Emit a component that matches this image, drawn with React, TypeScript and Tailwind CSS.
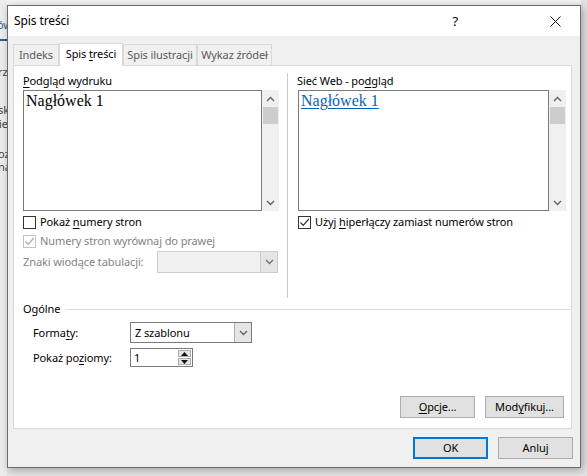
import React from 'react';

const ui = "font-['Segoe_UI','Noto_Sans',sans-serif] text-[11px] leading-[16px] tracking-[-0.1px]";

function Chevron({ dir, color = '#606060' }: { dir: 'up' | 'down'; color?: string }) {
  return (
    <svg width="9" height="6" viewBox="0 0 9 6">
      <polyline
        points={dir === 'up' ? '1,5 4.5,1.5 8,5' : '1,1 4.5,4.5 8,1'}
        fill="none"
        stroke={color}
        strokeWidth="1.3"
      />
    </svg>
  );
}

function Check({ color }: { color: string }) {
  return (
    <svg width="11" height="11" viewBox="0 0 11 11">
      <polyline points="1.5,5.5 4.2,8.3 9.8,2" fill="none" stroke={color} strokeWidth="1.2" />
    </svg>
  );
}

function Checkbox({ checked, disabled }: { checked?: boolean; disabled?: boolean }) {
  return (
    <div
      className={`w-[13px] h-[13px] border flex items-center justify-center bg-white shrink-0 ${
        disabled ? 'border-[#c4c4c4]' : 'border-[#333333]'
      }`}
    >
      {checked && <Check color={disabled ? '#a8a8a8' : '#333333'} />}
    </div>
  );
}

function Scrollbar() {
  return (
    <div className="w-[17px] h-[121px] bg-[#f0f0f0] flex flex-col items-center shrink-0">
      <div className="h-[17px] flex items-center justify-center">
        <Chevron dir="up" />
      </div>
      <div className="w-[15px] h-[17px] bg-[#cdcdcd]" />
      <div className="flex-1" />
      <div className="h-[17px] flex items-center justify-center">
        <Chevron dir="down" />
      </div>
    </div>
  );
}

function U({ children }: { children: React.ReactNode }) {
  return <span className="underline underline-offset-2">{children}</span>;
}

function Tab({ label, active, w }: { label: React.ReactNode; active?: boolean; w: string }) {
  return (
    <div
      className={`${w} flex items-center justify-center whitespace-nowrap border-t border-x border-[#d9d9d9] ${
        active ? 'h-[23px] bg-white text-black relative z-10 pb-[2px]' : 'h-[21px] mb-px text-[#5a5a5a] bg-[#f0f0f0]'
      }`}
    >
      {label}
    </div>
  );
}

function Button({ children, w, primary }: { children: React.ReactNode; w: string; primary?: boolean }) {
  return (
    <div
      className={`${w} h-[22px] bg-[#e1e1e1] flex items-center justify-center whitespace-nowrap ${
        primary ? 'border-2 border-[#0078d7]' : 'border border-[#adadad]'
      }`}
    >
      {children}
    </div>
  );
}

export default function App() {
  return (
    <div className={`w-[587px] h-[476px] bg-[#e4e4e4] flex overflow-hidden ${ui}`}>
      {/* document behind the dialog */}
      <div className="w-[7px] h-full bg-[#ececec] overflow-hidden flex flex-col text-[#444] shrink-0 text-[11px]">
        <div className="h-[17px]" />
        <div className="h-[16px] -ml-[3px] text-[#2b579a] whitespace-nowrap">ów</div>
        <div className="h-[6px]" />
        <div className="h-[2px] bg-[#2b579a]" />
        <div className="h-[23px]" />
        <div className="h-[16px] -ml-[2px] whitespace-nowrap">rz</div>
        <div className="h-[24px]" />
        <div className="h-[12px] leading-[12px] -ml-[2px] whitespace-nowrap">sk</div>
        <div className="h-[2px]" />
        <div className="h-[12px] leading-[12px] -ml-[1px] whitespace-nowrap">ie</div>
        <div className="h-[18px]" />
        <div className="h-[11px] leading-[11px] -ml-[2px] whitespace-nowrap">oz</div>
        <div className="h-[2px]" />
        <div className="h-[11px] leading-[11px] -ml-[2px] whitespace-nowrap">na</div>
      </div>

      <div className="flex flex-col">
        <div className="h-[5px] bg-[#f3f3f3]" />
        <div className="w-[574px] h-[463px] border border-[#6b6b6b] bg-[#f0f0f0] flex flex-col shadow-[2px_2px_8px_rgba(0,0,0,0.3)]">
          {/* title bar */}
          <div className="h-[30px] bg-white flex items-center pl-[6px] shrink-0">
            <span className="text-[12px]">Spis treści</span>
            <span className="ml-auto mr-[72px] text-[13px]">?</span>
            <div className="w-[50px] h-full flex items-center justify-center">
              <svg width="11" height="11" viewBox="0 0 11 11">
                <path d="M0.5 0.5 L10.5 10.5 M10.5 0.5 L0.5 10.5" stroke="#111" strokeWidth="1" />
              </svg>
            </div>
          </div>

          {/* tabs */}
          <div className="mt-[7px] ml-[5px] h-[23px] -mb-px flex items-end shrink-0">
            <Tab w="w-[46px]" label="Indeks" />
            <Tab
              w="w-[64px]"
              active
              label={
                <span>
                  Spis <U>t</U>reści
                </span>
              }
            />
            <Tab w="w-[74px]" label="Spis ilustracji" />
            <Tab w="w-[75px]" label="Wykaz źródeł" />
          </div>

          {/* tab panel */}
          <div className="ml-[5px] w-[559px] h-[364px] border border-[#d9d9d9] bg-white flex flex-col pt-[7px] pl-[9px] shrink-0">
            <div className="flex h-[225px]">
              {/* print preview */}
              <div className="w-[264px] flex flex-col">
                <div>
                  <U>P</U>odgląd wydruku
                </div>
                <div className="mt-px flex">
                  <div className="w-[239px] h-[121px] border border-[#7a7a7a] px-[2px] font-['Liberation_Serif',serif] text-[16px] leading-[20px] tracking-normal">
                    Nagłówek 1
                  </div>
                  <Scrollbar />
                </div>
                <div className="mt-[3px] h-[16px] flex items-center gap-[4px]">
                  <Checkbox />
                  <span>
                    Pokaż <U>n</U>umery stron
                  </span>
                </div>
                <div className="mt-[3px] h-[16px] flex items-center gap-[4px] text-[#838383]">
                  <Checkbox checked disabled />
                  <span>Numery stron wyrównaj do prawej</span>
                </div>
                <div className="mt-[2px] flex items-center text-[#838383]">
                  <span className="w-[134px] whitespace-nowrap">Znaki wiodące tabulacji:</span>
                  <div className="w-[121px] h-[22px] border border-[#cccccc] bg-[#f0f0f0] flex justify-end">
                    <div className="w-[17px] h-full border-l border-[#cccccc] bg-[#e5e5e5] flex items-center justify-center">
                      <Chevron dir="down" color="#707070" />
                    </div>
                  </div>
                </div>
              </div>

              <div className="w-px h-[225px] bg-[#c8c8c8]" />

              {/* web preview */}
              <div className="ml-[9px] flex flex-col">
                <div>
                  Sieć Web - po<U>d</U>gląd
                </div>
                <div className="mt-px ml-px flex">
                  <div className="w-[251px] h-[121px] border border-[#7a7a7a] px-[2px] font-['Liberation_Serif',serif] text-[16px] leading-[20px] tracking-normal">
                    <span className="text-[#0563c1] underline underline-offset-2">Nagłówek 1</span>
                  </div>
                  <Scrollbar />
                </div>
                <div className="mt-[3px] ml-px h-[16px] flex items-center gap-[4px]">
                  <Checkbox checked />
                  <span>
                    Użyj <U>h</U>iperłączy zamiast numerów stron
                  </span>
                </div>
              </div>
            </div>

            {/* general */}
            <div className="mt-[3px] flex items-center">
              <span>Ogólne</span>
              <div className="flex-1 h-px bg-[#dcdcdc] ml-[6px]" />
            </div>
            <div className="mt-[5px] pl-[10px] flex items-center">
              <span className="w-[97px]">
                Forma<U>t</U>y:
              </span>
              <div className="w-[122px] h-[21px] border border-[#7a7a7a] flex items-center">
                <span className="pl-[4px] flex-1">Z szablonu</span>
                <div className="w-[17px] h-full bg-[#e5e5e5] border-l border-[#adadad] flex items-center justify-center">
                  <Chevron dir="down" />
                </div>
              </div>
            </div>
            <div className="mt-[5px] pl-[10px] flex items-center">
              <span className="w-[97px]">
                Pokaż po<U>z</U>iomy:
              </span>
              <div className="w-[63px] h-[19px] border border-[#7a7a7a] flex items-center">
                <span className="pl-[3px] flex-1">1</span>
                <div className="w-[15px] h-full flex flex-col gap-px p-px">
                  <div className="flex-1 bg-[#e5e5e5] border border-[#adadad] flex items-center justify-center">
                    <svg width="7" height="4" viewBox="0 0 7 4">
                      <polygon points="0,4 3.5,0 7,4" fill="#111" />
                    </svg>
                  </div>
                  <div className="flex-1 bg-[#e5e5e5] border border-[#adadad] flex items-center justify-center">
                    <svg width="7" height="4" viewBox="0 0 7 4">
                      <polygon points="0,0 3.5,4 7,0" fill="#111" />
                    </svg>
                  </div>
                </div>
              </div>
            </div>

            <div className="mt-auto pb-[10px] pr-[7px] flex justify-end gap-[10px]">
              <Button w="w-[75px]">
                <span>
                  <U>O</U>pcje...
                </span>
              </Button>
              <Button w="w-[79px]">
                <span>
                  Mod<U>y</U>fikuj...
                </span>
              </Button>
            </div>
          </div>

          <div className="mt-[8px] pr-[7px] flex justify-end gap-[10px]">
            <Button w="w-[75px]" primary>
              OK
            </Button>
            <Button w="w-[75px]">Anluj</Button>
          </div>
        </div>
      </div>
    </div>
  );
}
